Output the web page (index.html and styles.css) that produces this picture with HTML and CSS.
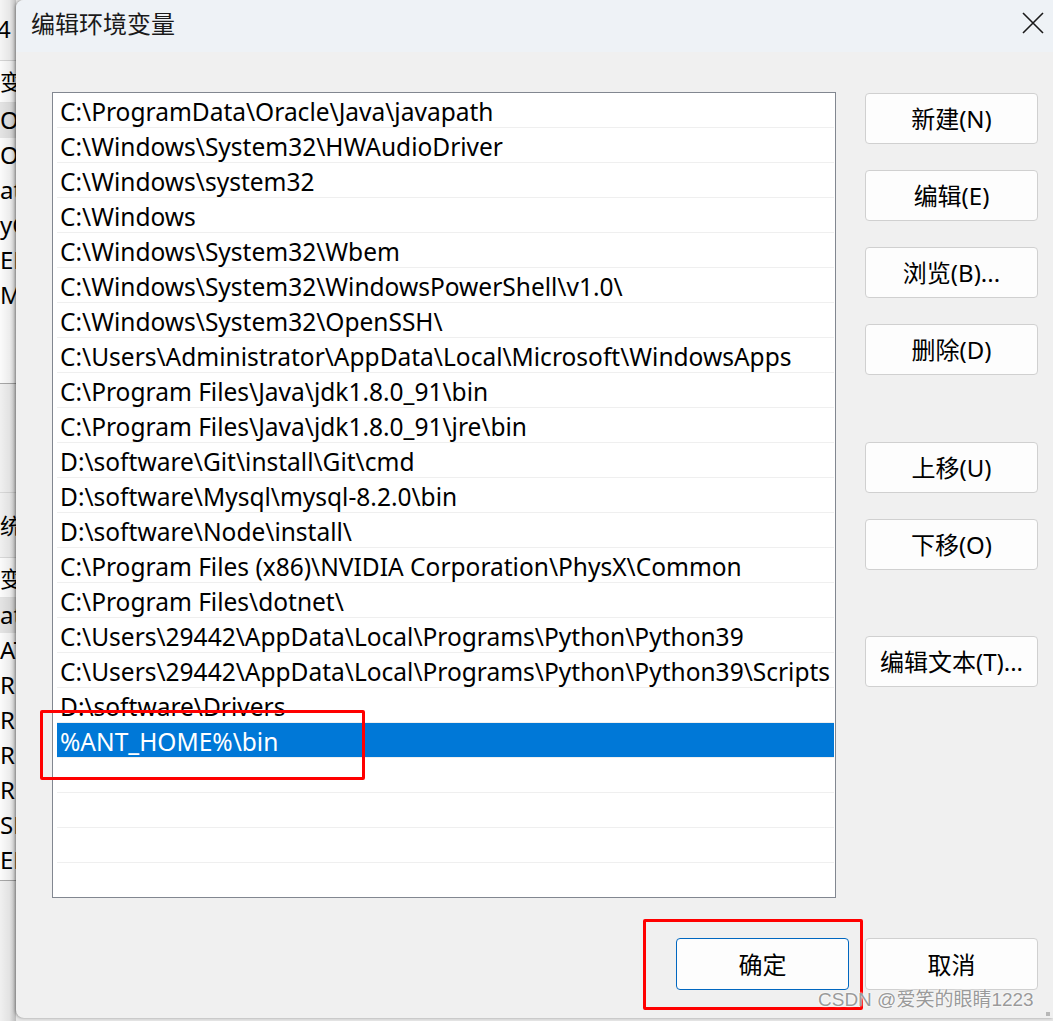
FILE: index.html
```html
<!doctype html>
<html lang="zh-CN">
	<head>
		<meta charset="UTF-8" />
		<title>编辑环境变量</title>
		<link rel="stylesheet" href="styles.css">
	</head>
	<body>
		<div class="screen">
			<aside class="behind">
				<div class="behind-top"><span>4</span></div>
				<div class="behind-list">
					<p class="th">变量</p>
					<p class="hover">On</p>
					<p>On</p>
					<p>at</p>
					<p>yC</p>
					<p>EM</p>
					<p>M</p>
				</div>
				<div class="behind-gap"></div>
				<div class="behind-label">统变</div>
				<div class="behind-list lower">
					<p class="th">变量</p>
					<p class="hover">at</p>
					<p>AT</p>
					<p>RO</p>
					<p>RO</p>
					<p>RO</p>
					<p>RO</p>
					<p>SM</p>
					<p>EM</p>
				</div>
				<div class="behind-shade"></div>
			</aside>

			<section class="dialog">
				<header class="titlebar">
					<h1>编辑环境变量</h1>
					<a href="javascript:;" class="close">
						<svg width="22" height="22" viewBox="0 0 22 22">
							<path d="M1 1 L21 21 M21 1 L1 21" stroke="#1a1a1a" stroke-width="1.6" fill="none"/>
						</svg>
					</a>
				</header>
				<div class="content">
					<div class="main">
						<ul class="paths">
							<li>C:\ProgramData\Oracle\Java\javapath</li>
							<li>C:\Windows\System32\HWAudioDriver</li>
							<li>C:\Windows\system32</li>
							<li>C:\Windows</li>
							<li>C:\Windows\System32\Wbem</li>
							<li>C:\Windows\System32\WindowsPowerShell\v1.0\</li>
							<li>C:\Windows\System32\OpenSSH\</li>
							<li>C:\Users\Administrator\AppData\Local\Microsoft\WindowsApps</li>
							<li>C:\Program Files\Java\jdk1.8.0_91\bin</li>
							<li>C:\Program Files\Java\jdk1.8.0_91\jre\bin</li>
							<li>D:\software\Git\install\Git\cmd</li>
							<li>D:\software\Mysql\mysql-8.2.0\bin</li>
							<li>D:\software\Node\install\</li>
							<li>C:\Program Files (x86)\NVIDIA Corporation\PhysX\Common</li>
							<li>C:\Program Files\dotnet\</li>
							<li>C:\Users\29442\AppData\Local\Programs\Python\Python39</li>
							<li>C:\Users\29442\AppData\Local\Programs\Python\Python39\Scripts</li>
							<li>D:\software\Drivers</li>
							<li class="active">%ANT_HOME%\bin</li>
							<li></li>
							<li></li>
							<li></li>
							<li></li>
						</ul>
						<div class="actions">
							<div class="group">
								<button>新建(N)</button>
								<button>编辑(E)</button>
								<button>浏览(B)...</button>
								<button>删除(D)</button>
							</div>
							<div class="group move">
								<button>上移(U)</button>
								<button>下移(O)</button>
							</div>
							<div class="group text">
								<button>编辑文本(T)...</button>
							</div>
						</div>
					</div>
					<div class="footer">
						<button class="primary">确定</button>
						<button>取消</button>
					</div>
				</div>
				<span class="grip"></span>
			</section>
		</div>

		<div class="mark mark-row"></div>
		<div class="mark mark-ok"></div>
		<div class="watermark">CSDN @爱笑的眼睛1223</div>
	</body>
</html>
```

FILE: styles.css
```css
*{
	margin: 0;
	padding: 0;
	box-sizing: border-box;
}
html, body{
	width: 1053px;
	height: 1021px;
	overflow: hidden;
}
body{
	font-family: "Noto Sans", "Noto Sans CJK SC", sans-serif;
	color: #000;
	background: #e6e6e6;
	position: relative;
}
.screen{
	display: flex;
	height: 1021px;
}

/* window behind the dialog */
.behind{
	width: 16px;
	flex: none;
	overflow: hidden;
	position: relative;
	background: #f0f0f0;
	font-size: 24px;
	white-space: nowrap;
}
.behind-top{
	height: 61px;
	line-height: 58px;
	background: #f5f5f5;
	border-bottom: 1px solid #d4d4d4;
	text-indent: -3px;
}
.behind-list{
	height: 323px;
	background: #fbfbfb;
	border-bottom: 1px solid #a8a8a8;
}
.behind-list p{
	height: 35px;
	line-height: 34px;
}
.behind-list p.th{
	height: 42px;
	line-height: 40px;
	border-bottom: 1px solid #e2e2e2;
	font-size: 22px;
}
.behind-list p.hover{
	background: #e4e4e4;
}
.behind-gap{
	height: 108px;
}
.behind-label{
	height: 66px;
	line-height: 64px;
	font-size: 22px;
	border-top: 1px solid #d8d8d8;
	border-bottom: 1px solid #d8d8d8;
}
.behind-list.lower{
	height: 323px;
}
.behind-list.lower p.th{
	height: 40px;
}
.behind-shade{
	position: absolute;
	top: 0;
	left: 0;
	right: 0;
	bottom: 0;
	background: linear-gradient(to right, rgba(0,0,0,0) 0, rgba(0,0,0,0.06) 60%, rgba(0,0,0,0.22) 100%);
}

/* dialog */
.dialog{
	flex: 1;
	height: 1018px;
	background: #f0f0f0;
	border-top-left-radius: 8px;
	border-bottom-left-radius: 8px;
	box-shadow: -1px 0 3px rgba(0,0,0,0.35);
	overflow: hidden;
	position: relative;
}
.titlebar{
	height: 52px;
	background: #eef2f6;
	display: flex;
	justify-content: space-between;
	align-items: flex-start;
	padding-left: 15px;
}
.titlebar h1{
	font-size: 24px;
	font-weight: 400;
	line-height: 48px;
	color: #1a1a1a;
}
.close{
	display: block;
	margin: 12px 9px 0 0;
	width: 22px;
	height: 22px;
}
.content{
	padding: 40px 15px 0 36px;
}
.main{
	display: flex;
	align-items: flex-start;
}
.paths{
	width: 784px;
	height: 806px;
	list-style: none;
	background: #fff;
	border: 1px solid #828790;
	padding: 0 1px 0 4px;
	overflow: hidden;
}
.paths li{
	height: 35px;
	line-height: 33px;
	padding-top: 2px;
	border-bottom: 1px solid #efefef;
	padding-left: 3px;
	font-size: 24.5px;
	white-space: nowrap;
}
.paths li.active{
	background: #0078d7;
	color: #fff;
}
.actions{
	width: 173px;
	margin-left: 29px;
	padding-top: 1px;
}
.group{
	display: flex;
	flex-direction: column;
	gap: 26px;
}
.group.move{
	margin-top: 67px;
}
.group.text{
	margin-top: 66px;
}
button{
	display: block;
	width: 173px;
	height: 51px;
	background: #fdfdfd;
	border: 1px solid #d0d0d0;
	border-radius: 4px;
	font-family: "Noto Sans", "Noto Sans CJK SC", sans-serif;
	font-size: 24px;
	color: #000;
	padding-bottom: 2px;
}
.footer{
	margin-top: 40px;
	display: flex;
	justify-content: flex-end;
	gap: 16px;
}
.footer button{
	height: 52px;
}
.footer button.primary{
	border-color: #0067c0;
}
.grip{
	position: absolute;
	right: 3px;
	bottom: 2px;
	width: 4px;
	height: 4px;
	background: #b8b8b8;
}

/* annotations over the screenshot */
.mark{
	position: absolute;
	border: 3px solid #ff0000;
	border-radius: 2px;
}
.mark-row{
	left: 40px;
	top: 710px;
	width: 325px;
	height: 70px;
}
.mark-ok{
	left: 643px;
	top: 919px;
	width: 220px;
	height: 91px;
}
.watermark{
	position: absolute;
	left: 818px;
	top: 987px;
	font-family: "Liberation Sans", "Noto Sans CJK SC", sans-serif;
	font-size: 19px;
	line-height: 26px;
	color: #9a9a9a;
	text-shadow: 0 0 2px #fff, 0 0 2px #fff;
	white-space: nowrap;
}
```
